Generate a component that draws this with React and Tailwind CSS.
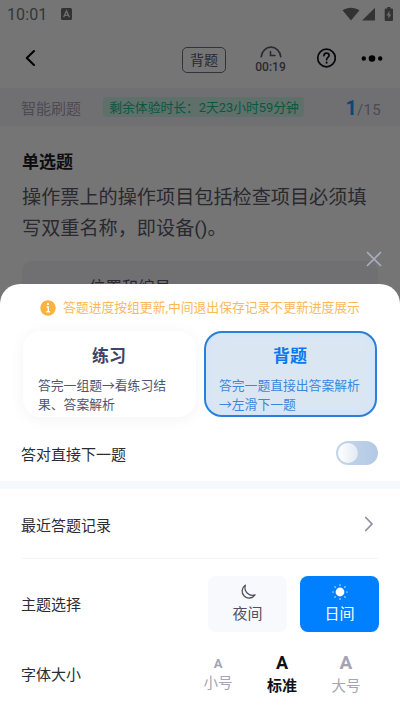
import React, { useState } from 'react';

const StatusBar = () => (
  <div className="h-[27px] flex items-center justify-between pl-[7px] pr-[7px] text-[#767676]">
    <div className="flex items-center gap-[14px]">
      <span className="text-[16px] leading-[27px] tracking-[0.1px] pt-[1px]">10:01</span>
      <svg width="11" height="12" viewBox="0 0 11 12">
        <rect width="11" height="12" rx="1.5" fill="#6e6e6e" />
        <path d="M2.6 9.2 5.5 3l2.9 6.2M3.8 7.4h3.4" fill="none" stroke="#f0f0f0" strokeWidth="1.4" />
      </svg>
    </div>
    <div className="flex items-center">
      <svg width="51" height="14" viewBox="0 0 51 14" fill="#707070">
        <path d="M0.5 3.2C5.5-0.2 12.5-0.2 17.5 3.2L9 13.500z" />
        <path d="M33 0.800v12.800h-13z" />
        <path d="M43.700 1.4h1.600V0h3v1.4h1.700q1 0 1 1v10.600q0 1-1 1h-6.300q-1 0-1-1V2.400q0-1 1-1z" />
        <path d="M47.500 3.800 44.400 8.500h1.900v3.600l2.900-4.800h-1.700z" fill="#e8e8e8" />
      </svg>
    </div>
  </div>
);

const Header = () => (
  <div className="h-[61px] flex items-center pl-[25px] pr-[17px]">
    <svg width="11" height="18" viewBox="0 0 11 18" fill="none" stroke="#000" strokeWidth="2.100" strokeLinecap="round" strokeLinejoin="round">
      <path d="M9 2 1.800 9 9 16" />
    </svg>
    <div className="ml-[146px] mt-[4px] w-[44px] h-[26px] rounded-[5px] border border-[#70707e] text-[#5c5c70] text-[14px] flex items-center justify-center">
      <span className="pt-[2px]">背题</span>
    </div>
    <div className="ml-[28px] mt-[4px] w-[34px] flex flex-col items-center text-[#5c5c70]">
      <svg width="22" height="12" viewBox="0 0 22 12" fill="none" stroke="currentColor" strokeWidth="1.600" strokeLinecap="round">
        <path d="M1.200 10.800C1.900 5.100 6 1.100 11 1.100s9.100 4 9.800 9.700" />
        <path d="M10.500 5.500v4h4.500" />
      </svg>
      <span className="text-[12px] leading-[14px] mt-[2px] font-medium mr-[1px]">00:19</span>
    </div>
    <svg className="ml-[28px]" width="20" height="20" viewBox="0 0 20 20" fill="none" stroke="#12121c" strokeWidth="1.700" strokeLinecap="round">
      <circle cx="10.500" cy="10" r="8.800" />
      <path d="M7.900 7.700c.1-1.600 1.200-2.500 2.600-2.500s2.600.9 2.600 2.300c0 1.900-2.500 2-2.500 4.200" />
      <path d="M10.600 14.600v.1" strokeWidth="2" />
    </svg>
    <svg className="ml-auto" width="22" height="8" viewBox="0 0 22 8" fill="#000">
      <circle cx="2.800" cy="4.500" r="2.200" />
      <circle cx="11" cy="4.500" r="3.300" />
      <circle cx="19.200" cy="4.500" r="2.200" />
    </svg>
  </div>
);

const Question = () => (
  <div className="h-[712px] bg-white flex flex-col">
    <StatusBar />
    <Header />
    <div className="h-[38px] bg-[#f4f4fb] flex items-center pl-[21px] pr-[19px]">
      <span className="text-[15px] text-[#a4a4b6] pt-[4px]">智能刷题</span>
      <div className="ml-[22px] w-[201px] h-[20px] mt-[-1px] rounded-[3px] bg-[#d0f2e6] text-[#16bd8c] text-[12.8px] flex items-center justify-center whitespace-nowrap">
        <span className="pt-[2px] pl-[1px]">剩余体验时长：2天23小时59分钟</span>
      </div>
      <div className="ml-auto flex items-baseline text-[#a4a4b6] pt-[1px]">
        <span className="text-[20px] font-bold text-[#1c9cff]">1</span>
        <span className="text-[15px] tracking-[0.3px]">/15</span>
      </div>
    </div>
    <div className="px-[22px] pt-[22px]">
      <h1 className="text-[17px] leading-[28px] font-bold text-[#1c1c28]">单选题</h1>
      <p className="mt-[7px] text-[19.15px] leading-[30.500px] text-[#595968] whitespace-nowrap">
        操作票上的操作项目包括检查项目必须填
        <br />
        写双重名称，即设备()。
      </p>
      <div className="mt-[17px] h-[52px] rounded-[10px] bg-[#f4f4fa] flex items-center pl-[23px] text-[#595968]">
        <span className="w-[12px] text-center text-[15px] pt-[6px]">A</span>
        <span className="ml-[32px] text-[16.400px] pt-[2px]">位置和编号</span>
      </div>
    </div>
  </div>
);

const modes = [
  { id: 'practice', title: '练习', lines: ['答完一组题→看练习结', '果、答案解析'] },
  { id: 'recite', title: '背题', lines: ['答完一题直接出答案解析', '→左滑下一题'] },
];

const MoonIcon = () => (
  <svg width="16" height="16" viewBox="0 0 16 16" fill="none" stroke="currentColor" strokeWidth="1.300" strokeLinejoin="round">
    <path d="M5.300 1.200A7 7 0 1 0 15 10.900C9.500 13 3.500 7.500 5.300 1.200z" />
  </svg>
);

const SunIcon = () => (
  <svg width="16" height="16" viewBox="0 0 16 16" fill="currentColor" stroke="currentColor" strokeWidth="1.200" strokeLinecap="round">
    <circle cx="8" cy="8" r="4.400" stroke="none" />
    <path d="M8 .8v.4M8 14.800v.4M.8 8h.4M14.800 8h.4M2.900 2.900l.3.3M12.800 12.800l.3.3M2.900 13.100l.3-.3M12.800 3.200l.3-.3" />
  </svg>
);

const SettingsSheet = () => {
  const [mode, setMode] = useState('recite');
  const [autoNext, setAutoNext] = useState(false);
  const [theme, setTheme] = useState('day');

  return (
    <div className="absolute left-0 right-0 bottom-0 h-[428px] bg-white rounded-t-[20px] text-[15px] text-[#2c2c36]">
      <div className="h-[47px] flex items-center justify-center gap-[7px] text-[12.800px] text-[#fbb95c]">
        <svg width="16" height="16" viewBox="0 0 16 16">
          <circle cx="8" cy="8" r="7.700" fill="#fbb33f" />
          <path d="M6.500 7h1.800v4.600M6.300 11.800h3.700" stroke="#fff" strokeWidth="1.400" fill="none" />
          <circle cx="8" cy="4.200" r="1.100" fill="#fff" />
        </svg>
        <span className="whitespace-nowrap pt-[1px]">答题进度按组更新,中间退出保存记录不更新进度展示</span>
      </div>

      <div className="flex gap-[8px] pl-[23px]">
        {modes.map((m) => {
          const active = m.id === mode;
          return (
            <button
              key={m.id}
              onClick={() => setMode(m.id)}
              className={`w-[173px] h-[86px] rounded-[18px] text-left pt-[8px] ${
                active
                  ? 'border-2 border-[#2a80d8] bg-[#dbe6f3] text-[#3a88de] shadow-[inset_0_0_12px_#cfe3fa] pl-[13px]'
                  : 'bg-white text-[#4c5674] shadow-[0_2px_16px_rgba(0,0,0,0.05)] pl-[15px]'
              }`}
            >
              <div className={`text-[17px] leading-[26px] font-bold text-center ${active ? 'pr-[14px] text-[#0a78ee]' : 'pr-[16px] text-[#3a4668]'}`}>{m.title}</div>
              <div className="mt-[6px] text-[12.800px] leading-[19px] whitespace-nowrap font-['Noto_Sans_CJK_SC',sans-serif]">
                {m.lines.map((line) => <div key={line}>{line}</div>)}
              </div>
            </button>
          );
        })}
      </div>

      <div className="h-[64px] pt-[11px] pl-[21px] pr-[22px] flex items-center justify-between">
        <span className="pt-[1px]">答对直接下一题</span>
        <button
          onClick={() => setAutoNext(!autoNext)}
          className={`w-[42px] h-[24px] mt-[-3px] p-[2px] rounded-full flex items-center bg-linear-to-r from-[#c5d6ea] to-[#b3c9e4] ${autoNext ? 'justify-end' : ''}`}
        >
          <span className="w-[20px] h-[20px] rounded-full bg-linear-to-r from-white to-[#e2eaf4]"></span>
        </button>
      </div>

      <div className="h-[8px] bg-[#f5f8fc]"></div>

      <div className="mx-[21px] h-[70px] border-b border-[#f6f6f8] flex items-center justify-between pr-[5px] pt-[1px]">
        <span className="pt-[4px]">最近答题记录</span>
        <svg width="10" height="16" viewBox="0 0 10 16" fill="none" stroke="#8f8fa3" strokeWidth="1.800" strokeLinecap="round" strokeLinejoin="round">
          <path d="M1.800 1.500 8 8l-6.200 6.500" />
        </svg>
      </div>

      <div className="h-[89px] pl-[21px] pr-[22px] flex items-center">
        <span className="mr-auto pt-[4px]">主题选择</span>
        <button
          onClick={() => setTheme('night')}
          className={`w-[79px] h-[56px] rounded-[8px] flex flex-col items-center pt-[8px] ${theme === 'night' ? 'bg-[#0080ff] text-white' : 'bg-[#f8f9fc] text-[#50505f]'}`}
        >
          <MoonIcon />
          <span className="leading-[22px] mt-[3px]">夜间</span>
        </button>
        <button
          onClick={() => setTheme('day')}
          className={`ml-[13px] mr-[-1px] w-[79px] h-[56px] rounded-[8px] flex flex-col items-center pt-[8px] ${theme === 'day' ? 'bg-[#0080ff] text-white' : 'bg-[#f8f9fc] text-[#50505f]'}`}
        >
          <SunIcon />
          <span className="leading-[22px] mt-[3px]">日间</span>
        </button>
      </div>

      <div className="h-[64px] pl-[21px] pr-[22px] flex items-start">
        <span className="mr-auto mt-[16px] leading-[22px]">字体大小</span>
        <div className="w-[64px] flex flex-col items-center text-[#a4a4b4]">
          <span className="text-[13px] leading-[16px] mt-[8px] font-bold">A</span>
          <span className="text-[14.500px] leading-[20px] mt-[2px]">小号</span>
        </div>
        <div className="w-[64px] flex flex-col items-center text-[#101018] font-bold">
          <span className="text-[18px] leading-[18px] mt-[6px]">A</span>
          <span className="text-[15px] leading-[20px] mt-[4px]">标准</span>
        </div>
        <div className="w-[64px] flex flex-col items-center text-[#a4a4b4]">
          <span className="text-[19px] leading-[20px] mt-[5px] font-bold">A</span>
          <span className="text-[14.500px] leading-[20px] mt-[4px]">大号</span>
        </div>
      </div>
    </div>
  );
};

const App = () => (
  <div className="relative w-[400px] h-[712px] overflow-hidden font-[Roboto,'Noto_Sans_CJK_SC',sans-serif]">
    <Question />
    <div className="absolute inset-0 bg-black/54"></div>
    <svg className="absolute right-[18px] top-[251px]" width="16" height="16" viewBox="0 0 16 16" stroke="#a9adbd" strokeWidth="1.700" strokeLinecap="round">
      <path d="M1.500 1.500l13 13M14.500 1.500l-13 13" />
    </svg>
    <SettingsSheet />
  </div>
);

export default App;
